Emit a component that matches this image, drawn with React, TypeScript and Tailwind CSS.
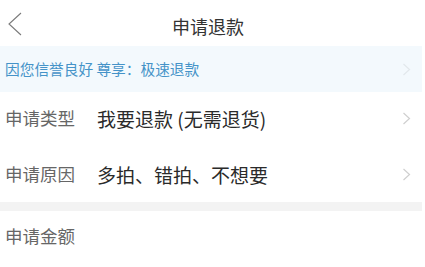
import React from "react";

const ROWS = [
  { label: "申请类型", value: "我要退款 (无需退货)" },
  { label: "申请原因", value: "多拍、错拍、不想要" },
];

function Chevron({ className }: { className?: string }) {
  return (
    <svg width="9" height="13" viewBox="0 0 9 13" fill="none" className={className}>
      <path d="M1.5 1 L7.5 6.5 L1.5 12" stroke="currentColor" strokeWidth="1.2" />
    </svg>
  );
}

export default function App() {
  return (
    <div
      className="w-[425px] h-[267px] overflow-hidden bg-white"
      style={{ fontFamily: '"Noto Sans CJK SC", "Noto Sans", sans-serif' }}
    >
      {/* header */}
      <div className="relative h-[46px] flex items-center justify-center pr-[9px] pt-[6px]">
        <svg width="16" height="24" viewBox="0 0 16 24" fill="none" className="absolute left-[7px] top-[12px] text-[#7a7a7a]">
          <path d="M14 1 L2 12 L14 23" stroke="currentColor" strokeWidth="1.1" />
        </svg>
        <span className="text-[18px] text-[#333] leading-none">申请退款</span>
      </div>

      {/* banner */}
      <div className="mr-[3px] h-[46px] bg-[#f3f9fd] flex items-center pl-[5px] pr-[11px]">
        <span className="flex-1 text-[14.7px] text-[#4593c8] leading-none">因您信誉良好 尊享：极速退款</span>
        <Chevron className="text-[#e2e8ec]" />
      </div>

      {ROWS.map((r, i) => (
        <div key={r.label} className={`flex items-center pl-[5px] pr-[14px] h-[55px] ${i === 0 ? "pb-[3px]" : "pb-[1px]"}`}>
          <span className="w-[92px] text-[17.5px] text-[#666] leading-none">{r.label}</span>
          <span className="flex-1 text-[19px] text-[#2a2a2a] leading-none">{r.value}</span>
          <Chevron className="text-[#cfcfcf]" />
        </div>
      ))}

      <div className="mr-[3px] h-[9px] bg-[#f3f3f3]" />

      <div className="h-[54px] flex items-center pl-[5px] pb-[4px]">
        <span className="text-[17.5px] text-[#666] leading-none">申请金额</span>
      </div>
    </div>
  );
}
